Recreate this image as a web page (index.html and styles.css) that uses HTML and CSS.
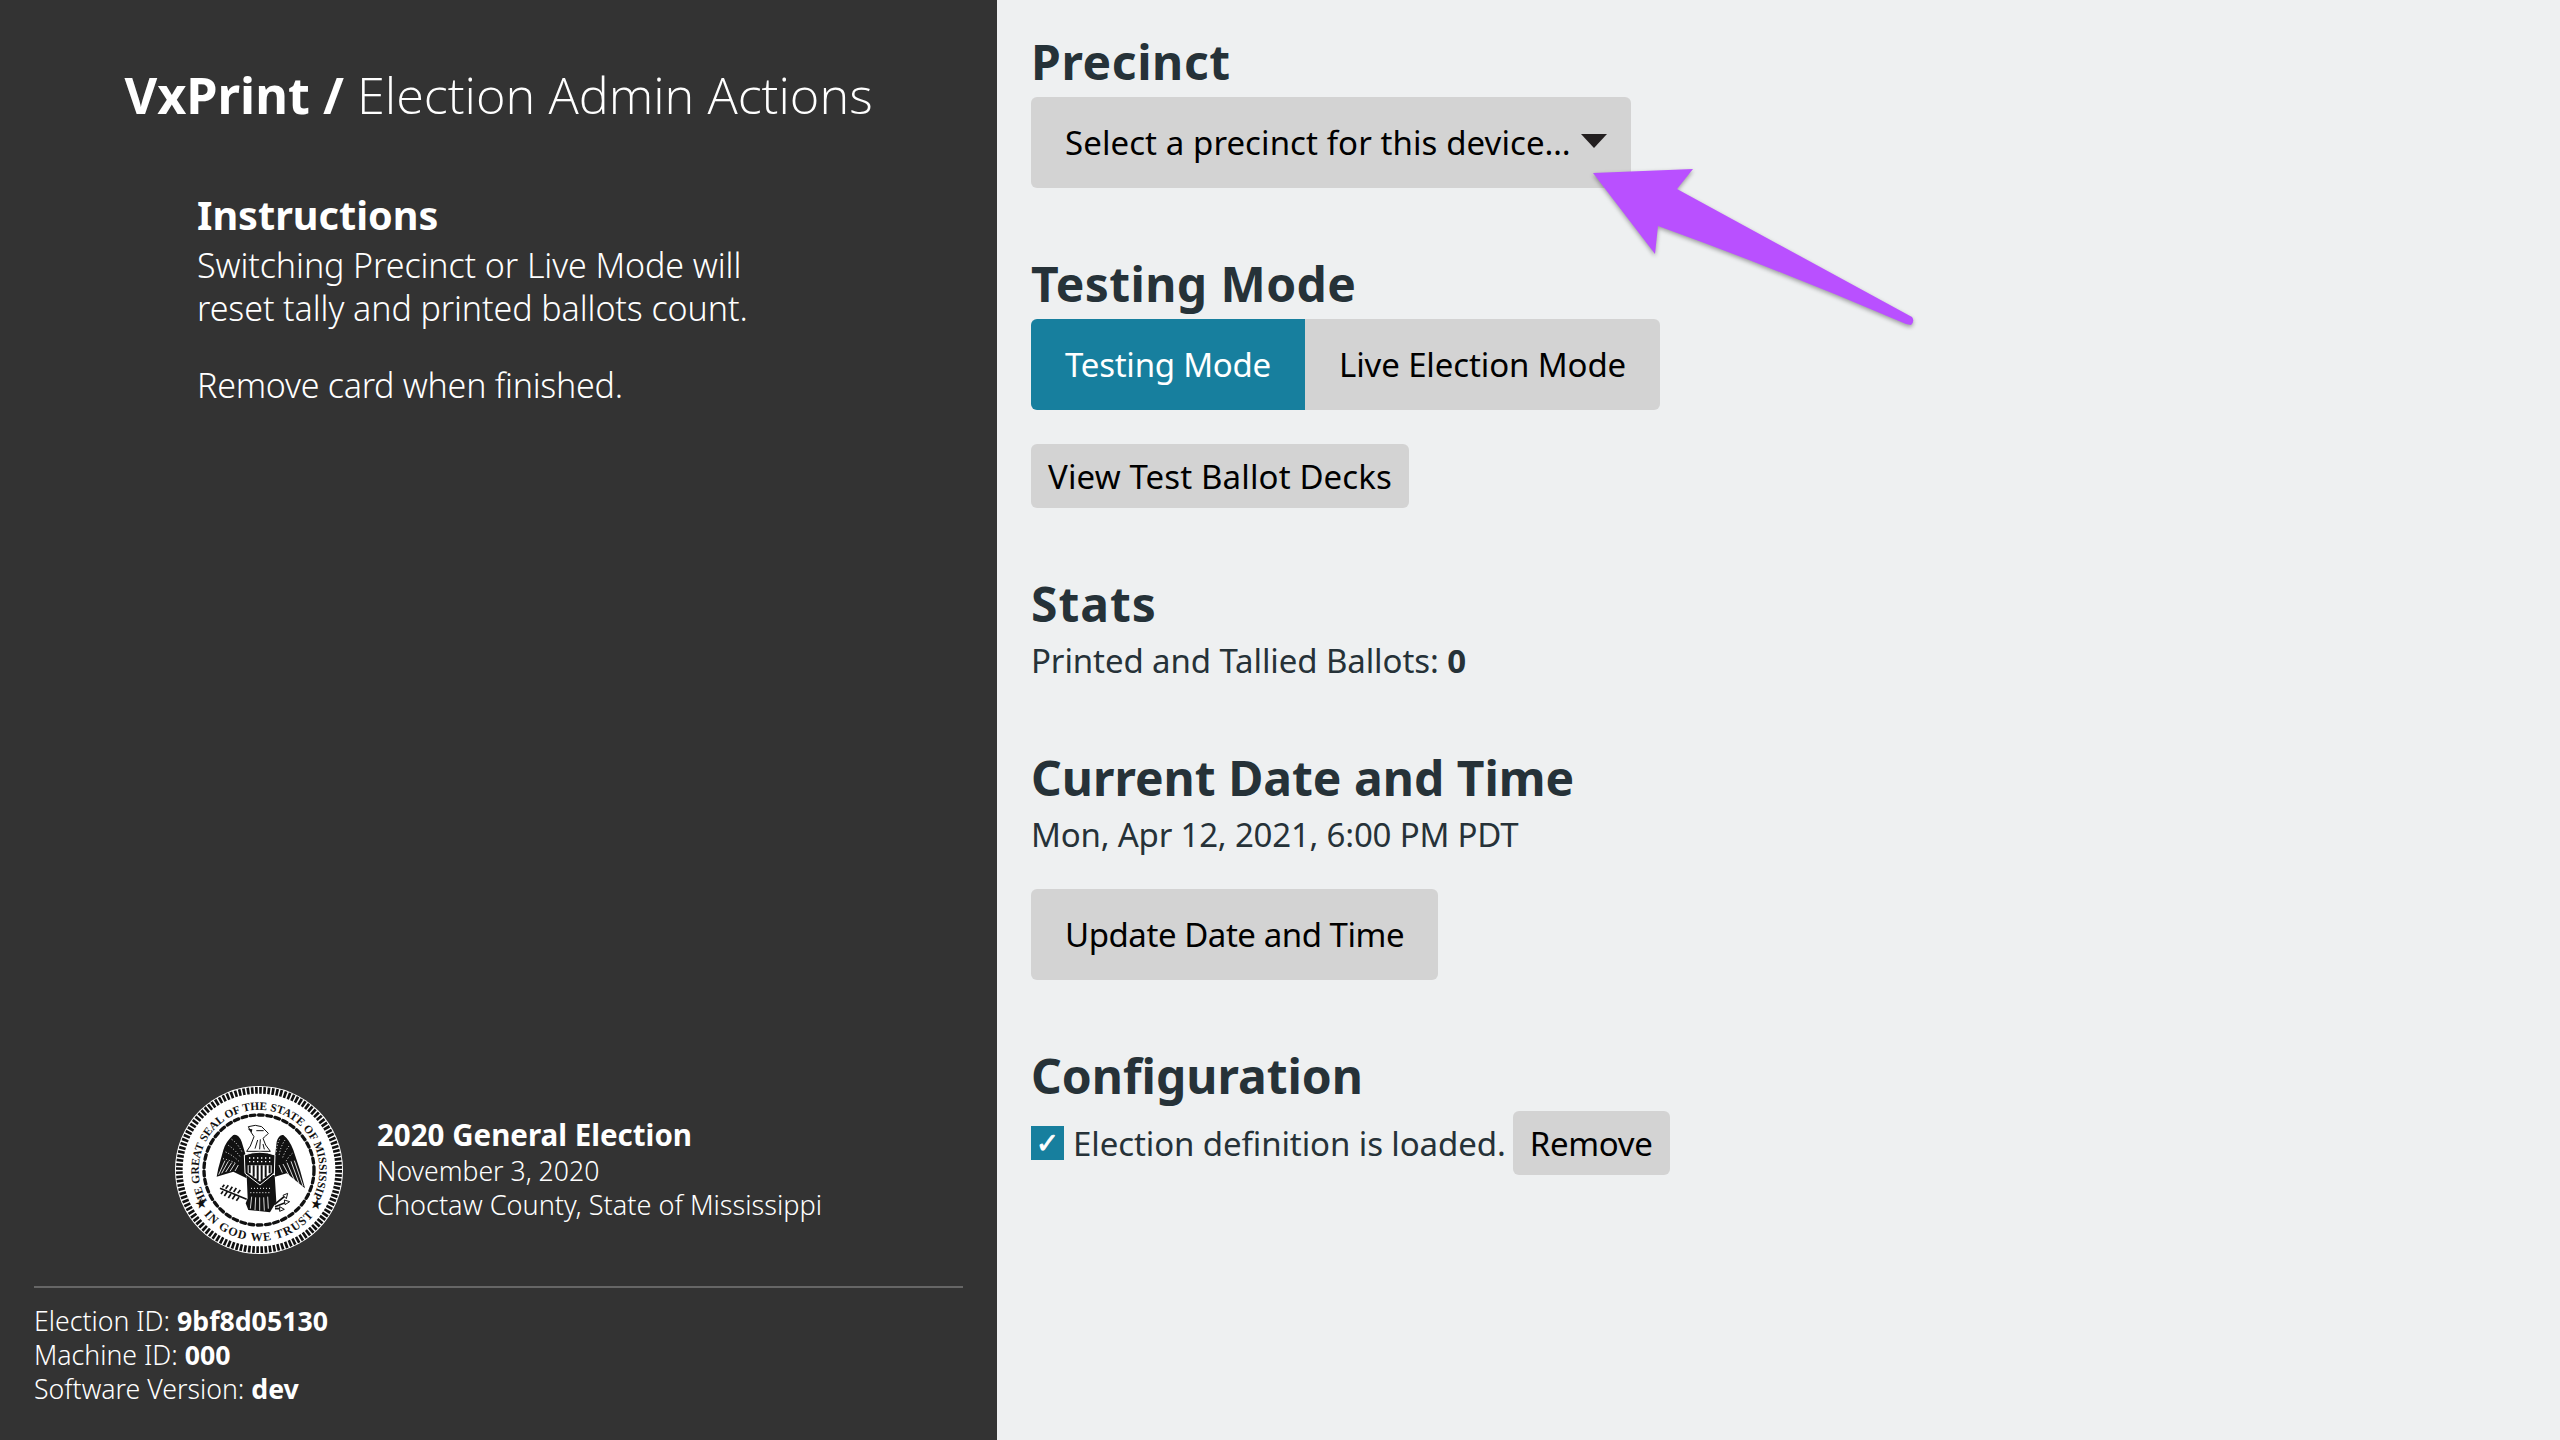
FILE: index.html
```html
<!DOCTYPE html>
<html lang="en">
<head>
<meta charset="utf-8">
<title>VxPrint</title>
<link rel="stylesheet" href="styles.css">
</head>
<body>
<div class="screen">
  <aside class="side">
    <h1 class="title"><b>VxPrint /</b> <span class="title-light">Election Admin Actions</span></h1>
    <div class="instructions">
      <h2 class="inst-head">Instructions</h2>
      <p class="inst-text sp-switch">Switching Precinct or Live Mode will<br>reset tally and printed ballots count.</p>
      <p class="inst-text inst-last">Remove card when finished.</p>
    </div>
    <div class="side-foot">
      <div class="election">
        <svg class="seal" viewBox="-252 -252 504 504">
          <defs>
            <path id="arcTop" d="M-160,85 A181,181 0 1 1 160,85"/>
            <path id="arcBot" d="M-205,55 A212,212 0 0 0 205,55"/>
          </defs>
          <circle r="252" fill="#fff"/>
          <circle r="239" fill="none" stroke="#111" stroke-width="20" stroke-dasharray="8 4.5"/>
          <text class="seal-text"><textPath href="#arcTop" startOffset="50%" text-anchor="middle">THE GREAT SEAL OF THE STATE OF MISSISSIPPI</textPath></text>
          <text class="seal-text seal-bottom"><textPath href="#arcBot" startOffset="50%" text-anchor="middle">★ IN GOD WE TRUST ★</textPath></text>
          <circle class="rope" r="165"/>
          <path d="M-40,-45 L-52,-85 Q-62,-110 -77,-105 Q-100,-85 -107,-60 L-122,-5 L-127,20 L-77,5 L-37,25 Z" fill="#111"/>
          <path d="M48,-40 L53,-85 Q60,-108 73,-105 Q92,-90 103,-60 L123,0 L138,55 L83,10 L48,20 Z" fill="#111"/>
          <path class="dots-thin" d="M-82,-92 Q-62,-78 -50,-52 M-92,-74 Q-70,-60 -54,-36 M-100,-54 Q-78,-44 -58,-24 M-108,-34 Q-88,-30 -70,-20 M62,-92 Q52,-74 52,-50 M78,-90 Q64,-70 60,-42 M90,-72 Q76,-54 70,-34 M100,-50 Q88,-40 80,-24"/>
          <path class="feather" d="M-62,-15 L-72,3 M-72,-20 L-87,4 M-82,-22 L-100,6 M-92,-26 L-112,10 M-102,-28 L-121,14 M60,-15 L70,8 M72,-18 L92,20 M84,-22 L106,30 M96,-26 L120,40 M106,-28 L132,48"/>
          <path d="M-37,15 L-34,85 L-40,100 L-32,120 L33,127 L52,95 L47,15 Z" fill="#111"/>
          <path class="feather" d="M-22,80 L-26,116 M-10,82 L-12,120 M2,82 L2,122 M14,82 L16,122 M26,80 L28,116"/>
          <path class="dots-thin" d="M-24,55 H34 M-26,68 H36"/>
          <path d="M-15,-100 L-25,-115 L-32,-130 Q-10,-138 8,-130 L28,-110 L20,-102 L12,-95 L20,-75 L34,-56 L-37,-56 L-26,-72 Z" fill="#fff" stroke="#111" stroke-width="3"/>
          <path d="M-34,-124 Q-26,-118 -22,-112 L-20,-122 Z" fill="#111"/>
          <path class="ticks" d="M-8,-118 L14,-118 M-4,-90 L-12,-64 M4,-92 L2,-62 M12,-78 L16,-62"/>
          <path d="M-44,-45 Q3,-62 48,-45 L46,10 L3,45 L-42,10 Z" fill="#111" stroke="#fff" stroke-width="3"/>
          <path d="M-34,-14 H38 V8 L3,35 L-34,8 Z" fill="#fff"/>
          <path class="dots" d="M-30,-36 H38 M-30,-25 H38"/>
          <path class="stripes" d="M-28,-14 V10 M-16,-14 V20 M-4,-14 V30 M8,-14 V32 M20,-14 V22 M32,-14 V10"/>
          <path class="leaves" d="M-117,55 L-37,88 M-110,52 L-104,44 M-100,56 L-92,46 M-88,62 L-80,50 M-76,66 L-68,54 M-64,70 L-56,60 M-108,64 L-114,72 M-96,66 L-104,78 M-84,72 L-92,84 M-72,76 L-80,88 M-60,82 L-68,92"/>
          <path class="branch" d="M46,104 L78,78 M48,110 L82,97 M48,116 L68,116"/>
          <path class="arrowhead" d="M72,76 L86,70 L82,86 Z M76,90 L92,95 L78,104 Z M62,110 L76,118 L62,124 Z"/>
        </svg>
        <div class="election-text">
          <div class="election-name">2020 General Election</div>
          <div>November 3, 2020</div>
          <div class="county">Choctaw County, State of Mississippi</div>
        </div>
      </div>
      <div class="ids">
        <div>Election ID: <b>9bf8d05130</b></div>
        <div>Machine ID: <b>000</b></div>
        <div>Software Version: <b>dev</b></div>
      </div>
    </div>
  </aside>
  <main class="main">
    <section class="sec">
      <h2 class="head sp-precinct">Precinct</h2>
      <div class="btn btn-big btn-select"><span class="sp-select">Select a precinct for this device…</span><i class="caret"></i></div>
    </section>
    <section class="sec">
      <h2 class="head sp-testing">Testing Mode</h2>
      <div class="seg">
        <div class="btn btn-big seg-on">Testing Mode</div>
        <div class="btn btn-big seg-off">Live Election Mode</div>
      </div>
      <div class="btn btn-small btn-after sp-view">View Test Ballot Decks</div>
    </section>
    <section class="sec">
      <h2 class="head sp-stats">Stats</h2>
      <p class="line sp-printed">Printed and Tallied Ballots: <b>0</b></p>
    </section>
    <section class="sec">
      <h2 class="head">Current Date and Time</h2>
      <p class="line sp-date">Mon, Apr 12, 2021, 6:00 PM PDT</p>
      <div class="btn btn-big btn-update">Update Date and Time</div>
    </section>
    <section class="sec">
      <h2 class="head">Configuration</h2>
      <div class="config">
        <span class="check">✓</span>
        <span class="line sp-def">Election definition is loaded.</span>
        <div class="btn btn-small sp-remove">Remove</div>
      </div>
    </section>
  </main>
  <svg class="arrow" viewBox="0 0 340 170">
    <path d="M3,8 L103,4 L87,24 L322,152 Q325,156 321,160 L316,159 Q190,105 68,61 L65,89 Z"/>
  </svg>
</div>
</body>
</html>
```
FILE: styles.css
```css
* { box-sizing: border-box; }
html, body { margin: 0; height: 100%; }
body { font-family: "Noto Sans", "Open Sans", sans-serif; font-size: 33px; line-height: 43px; }
h1, h2, p { margin: 0; }
.screen { position: relative; display: flex; width: 2560px; height: 1440px; overflow: hidden; }
.side { width: 997px; flex: none; background: #333; color: #fff; display: flex; flex-direction: column; padding: 63px 34px 34px; }
.title { font-size: 50.4px; line-height: 64px; font-weight: 400; text-align: center; }
.title b { font-weight: 700; }
.title-light { font-weight: 300; font-family: "Open Sans", sans-serif; }
.instructions { padding: 64px 0 0 163px; flex: 1; }
.inst-head { font-size: 39.6px; line-height: 48px; font-weight: 700; margin-bottom: 5px; }
.inst-text { font-size: 34px; font-weight: 300; }
.sp-switch { letter-spacing: -.08px; }
.inst-last { margin-top: 34px; letter-spacing: -.25px; }
.side-foot { display: flex; flex-direction: column; }
.election { display: flex; align-items: center; gap: 34px; padding: 0 0 32px 141px; }
.seal { width: 168px; height: 168px; flex: none; }
.seal-text { font-family: "Liberation Serif", serif; font-size: 34px; font-weight: 700; fill: #111; }
.seal-bottom { font-size: 36px; letter-spacing: 3.5px; }
.rope { fill: none; stroke: #111; stroke-width: 10; stroke-linecap: round; stroke-dasharray: 14 11; }
.feather { stroke: #fff; stroke-width: 2.5; fill: none; }
.dots-thin { stroke: #fff; stroke-width: 3; fill: none; stroke-dasharray: 3 6; }
.ticks { stroke: #111; stroke-width: 3; fill: none; }
.dots { stroke: #fff; stroke-width: 4; stroke-dasharray: 4 8; fill: none; }
.stripes { stroke: #111; stroke-width: 6; fill: none; }
.branch { stroke: #111; stroke-width: 5; fill: none; }
.leaves { stroke: #111; stroke-width: 5; fill: none; }
.arrowhead { fill: #fff; stroke: #111; stroke-width: 3; }
.election-text { font-size: 26.6px; line-height: 34px; font-weight: 300; padding-bottom: 3px; }
.election-name { font-size: 29.5px; font-weight: 700; line-height: 39px; }
.county { font-size: 27.1px; }
.ids { border-top: 2px solid #666; padding: 16px 0 0; font-size: 26.7px; line-height: 34px; font-weight: 300; }
.ids b { font-weight: 700; }
.main { flex: 1; background: #eef0f1; color: #263238; padding: 32px 34px 0; display: flex; flex-direction: column; gap: 66px; align-items: flex-start; }
.sec { display: flex; flex-direction: column; align-items: flex-start; }
.head { font-size: 48px; line-height: 60px; font-weight: 700; margin-bottom: 5px; }
.sp-precinct { letter-spacing: .6px; }
.sp-testing { letter-spacing: .4px; }
.sp-stats { letter-spacing: 1px; }
.sp-select { letter-spacing: .08px; }
.sp-view { letter-spacing: .13px; }
.sp-printed { letter-spacing: -.1px; }
.sp-date { letter-spacing: -.2px; }
.sp-def { letter-spacing: -.1px; }
.sp-remove { letter-spacing: -.3px; }
.btn { background: #d3d3d3; color: #000; border-radius: 6px; white-space: nowrap; display: flex; align-items: center; }
.btn-big { height: 91px; padding: 0 34px; }
.btn-small { height: 64px; padding: 0 17px; }
.btn-after { margin-top: 34px; }
.btn-update { margin-top: 33px; letter-spacing: -.45px; }
.btn-select { gap: 10px; padding-right: 24px; }
.caret { width: 0; height: 0; border-left: 13px solid transparent; border-right: 13px solid transparent; border-top: 14px solid #231f20; margin-top: -4px; }
.seg { display: flex; }
.seg-on { background: #177f9e; color: #fff; border-radius: 6px 0 0 6px; letter-spacing: -.25px; }
.seg-off { border-radius: 0 6px 6px 0; letter-spacing: -.12px; }
.line { font-weight: 400; }
.line b { font-weight: 700; }
.config { display: flex; align-items: center; }
.check { width: 33px; height: 34px; background: #177f9e; color: #fff; font-size: 28px; font-weight: 700; display: flex; align-items: center; justify-content: center; margin-right: 9px; font-family: "DejaVu Sans", sans-serif; -webkit-text-stroke: .8px #fff; }
.config .btn { margin-left: 7px; }
.arrow { position: absolute; left: 1590px; top: 165px; width: 340px; height: 170px; filter: drop-shadow(0 2px 2px rgba(0,0,0,.35)); }
.arrow path { fill: #b950ff; }
```
